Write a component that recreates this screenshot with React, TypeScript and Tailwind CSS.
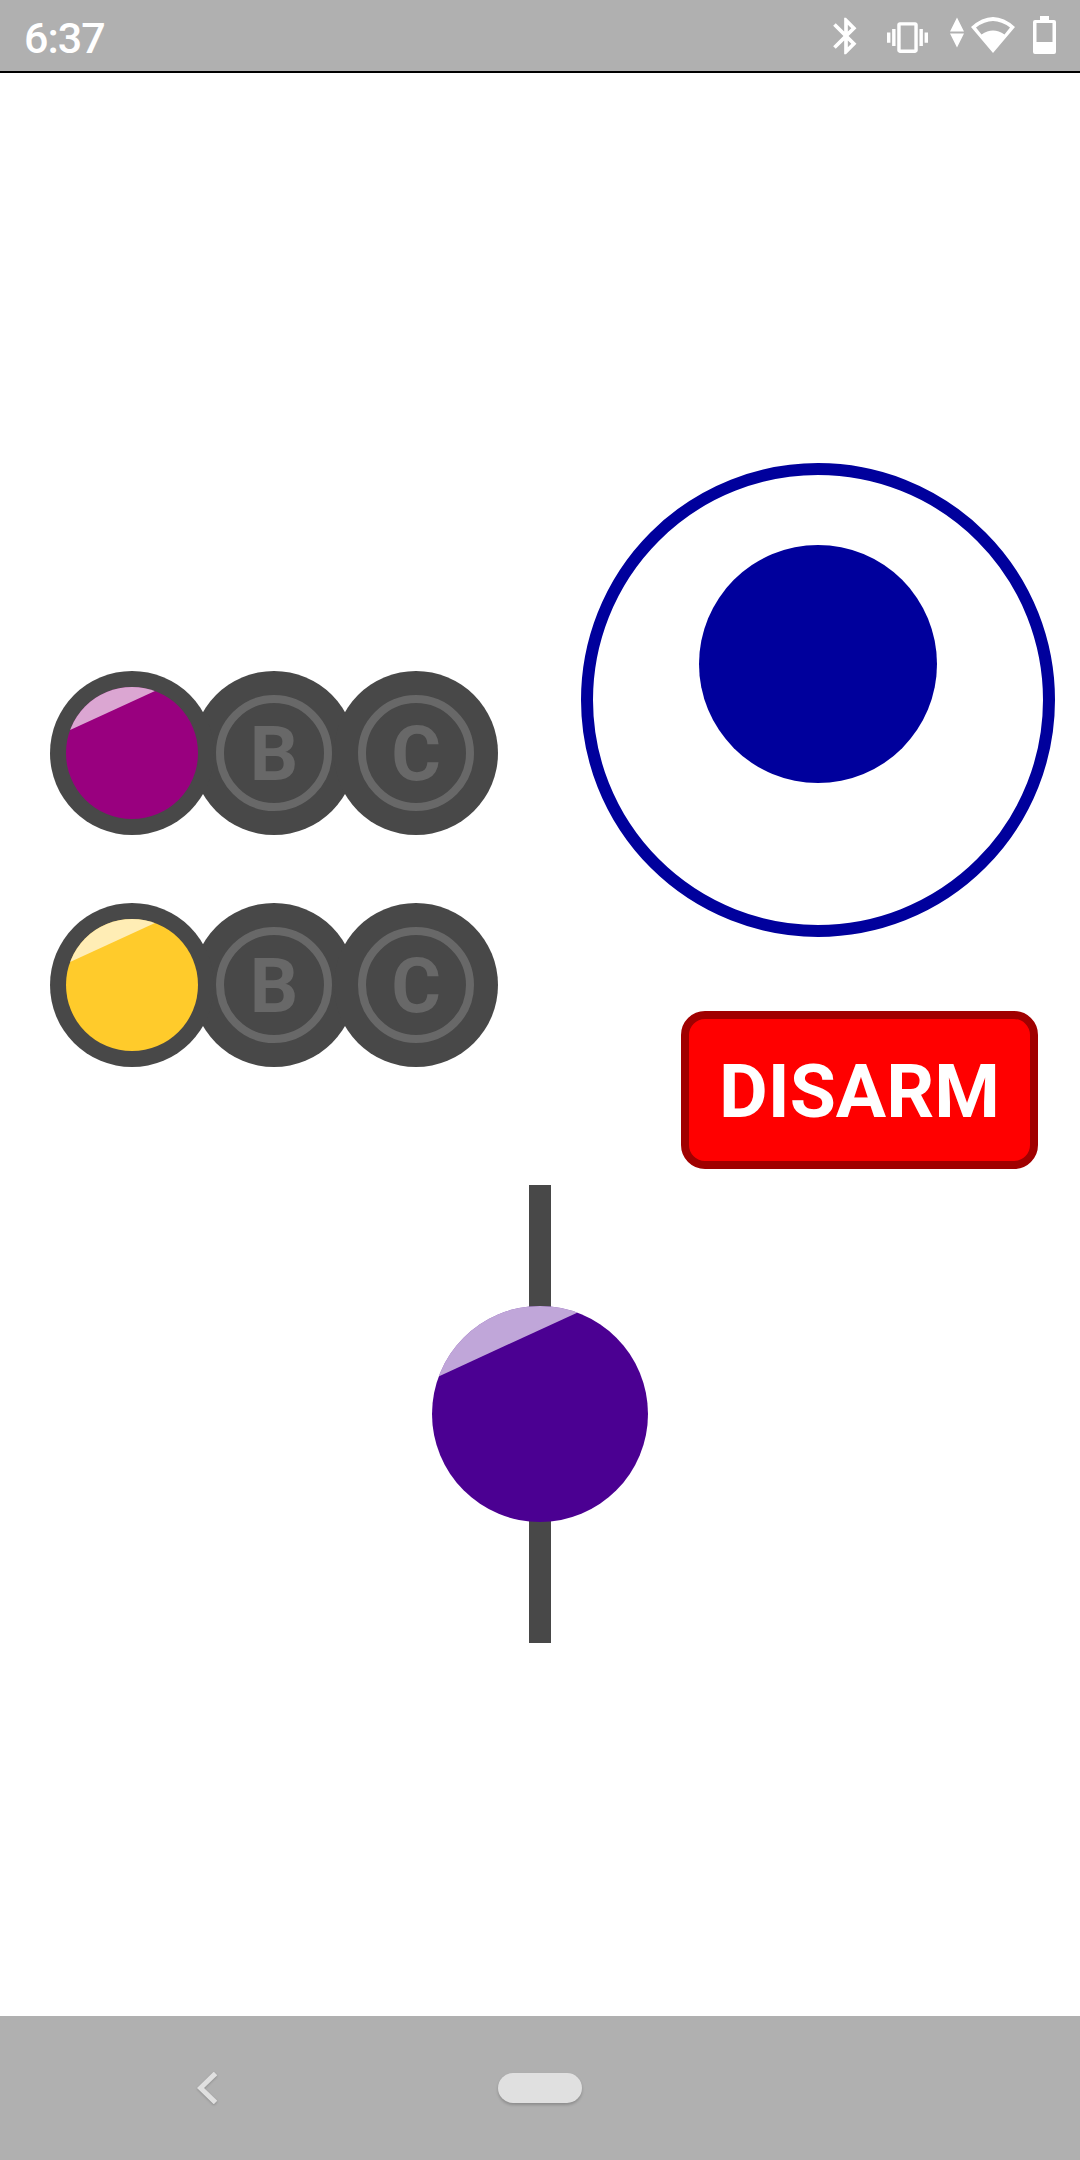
import React from "react";

function Gloss() {
  return <div className="absolute inset-0 bg-white/65 [clip-path:polygon(0_0,74%_0,0_34%)]" />;
}

function LetterButton({ letter }: { letter: string }) {
  return (
    <div className="w-[164px] h-[164px] -ml-[22px] rounded-full bg-[#484848] flex items-center justify-center">
      <div className="w-[116px] h-[116px] pt-[2px] rounded-full border-[8px] border-[#686868] flex items-center justify-center text-[#686868] text-[76px] font-bold leading-none">
        {letter}
      </div>
    </div>
  );
}

function ButtonRow({ color }: { color: string }) {
  return (
    <div className="flex isolate">
      <div className="relative z-10 w-[164px] h-[164px] rounded-full bg-[#484848] flex items-center justify-center">
        <div className={`relative w-[132px] h-[132px] rounded-full overflow-hidden ${color}`}>
          <Gloss />
        </div>
      </div>
      <LetterButton letter="B" />
      <LetterButton letter="C" />
    </div>
  );
}

function StatusIcons() {
  return (
    <div className="ml-auto flex items-start pr-[24px] text-white">
      <svg className="mt-[14px] w-[44px] h-[44px]" viewBox="0 0 24 24" fill="currentColor">
        <path d="M17.71 7.71L12 2h-1v7.59L6.41 5 5 6.41 10.59 12 5 17.59 6.41 19 11 14.41V22h1l5.71-5.71-4.3-4.29 4.3-4.29zM13 5.83l1.88 1.88L13 9.59V5.83zm1.88 10.46L13 18.17v-3.76l1.88 1.88z" />
      </svg>
      <svg className="mt-[17px] ml-[19px] w-[41px] h-[41px]" viewBox="0 0 24 24" fill="currentColor">
        <path d="M0 15h2V9H0v6zm3 2h2V7H3v10zm19-8v6h2V9h-2zm-3 8h2V7h-2v10zM16.5 3h-9C6.67 3 6 3.67 6 4.5v15c0 .83.67 1.5 1.5 1.5h9c.83 0 1.5-.67 1.5-1.5v-15c0-.83-.67-1.5-1.5-1.5zM16 19H8V5h8v14z" />
      </svg>
      <svg className="mt-[17px] ml-[22px] w-[14px] h-[31px]" viewBox="0 0 14 31" fill="currentColor">
        <path d="M7 0.5L14 14.5H0zM0 16.5h14L7 30.5z" />
      </svg>
      <svg className="mt-[17px] ml-[7px] w-[44px] h-[36px]" viewBox="0 0 44 36" fill="currentColor" fillRule="evenodd">
        <path d="M22 36L0 10Q22 -10 44 10ZM5 10.5Q22 -2.5 39 10.5L33.5 17.5Q22 9.5 10.5 17.5Z" />
      </svg>
      <svg className="mt-[16px] ml-[18px] w-[23px] h-[38px]" viewBox="0 0 23 38" fill="currentColor" fillRule="evenodd">
        <path d="M7 0h9v4h5a2 2 0 0 1 2 2v30a2 2 0 0 1-2 2H2a2 2 0 0 1-2-2V6a2 2 0 0 1 2-2h5zM3.5 7v19h16V7z" />
      </svg>
    </div>
  );
}

export default function App() {
  return (
    <div className="w-[1080px] h-[2160px] flex flex-col bg-white font-['Roboto',sans-serif]">
      <header className="h-[73px] shrink-0 bg-[#b0b0b0] border-b-2 border-black flex items-start">
        <span className="pl-[24px] pt-[12px] text-[43px] leading-[52px] font-medium tracking-[-1px] text-white">6:37</span>
        <StatusIcons />
      </header>

      <main className="flex-1 flex flex-col">
        <div className="flex justify-between">
          <div className="pl-[50px] pt-[598px] flex flex-col gap-[68px]">
            <ButtonRow color="bg-[#99007f]" />
            <ButtonRow color="bg-[#ffcb2b]" />
          </div>
          <div className="pt-[390px] pr-[25px] flex flex-col">
            <div className="w-[474px] h-[474px] rounded-full border-[12px] border-[#00009c] flex justify-center pt-[70px]">
              <div className="w-[238px] h-[238px] rounded-full bg-[#00009c]" />
            </div>
            <div className="ml-[100px] mt-[74px] w-[357px] h-[158px] pt-[2px] rounded-[24px] border-[8px] border-[#a00000] bg-[#ff0000] flex items-center justify-center text-white text-[75px] font-bold leading-none">
              DISARM
            </div>
          </div>
        </div>

        <div className="relative self-center mt-[16px] w-[216px] h-[458px] flex justify-center items-center">
          <div className="w-[22px] h-full bg-[#484848]" />
          <div className="absolute w-[216px] h-[216px] rounded-full overflow-hidden bg-[#4b0092]">
            <Gloss />
          </div>
        </div>
      </main>

      <nav className="h-[144px] shrink-0 bg-[#b0b0b0] flex items-center pl-[197px]">
        <svg className="w-[20px] h-[32px] drop-shadow-[0_1px_1px_rgba(0,0,0,0.2)]" viewBox="0 0 20 32" fill="none" stroke="#e0e0e0" strokeWidth="5">
          <path d="M18.5 1.5L3.5 16l15 14.5" />
        </svg>
        <div className="ml-[281px] w-[84px] h-[30px] rounded-full bg-[#e0e0e0] shadow-[0_2px_3px_rgba(0,0,0,0.2)]" />
      </nav>
    </div>
  );
}
